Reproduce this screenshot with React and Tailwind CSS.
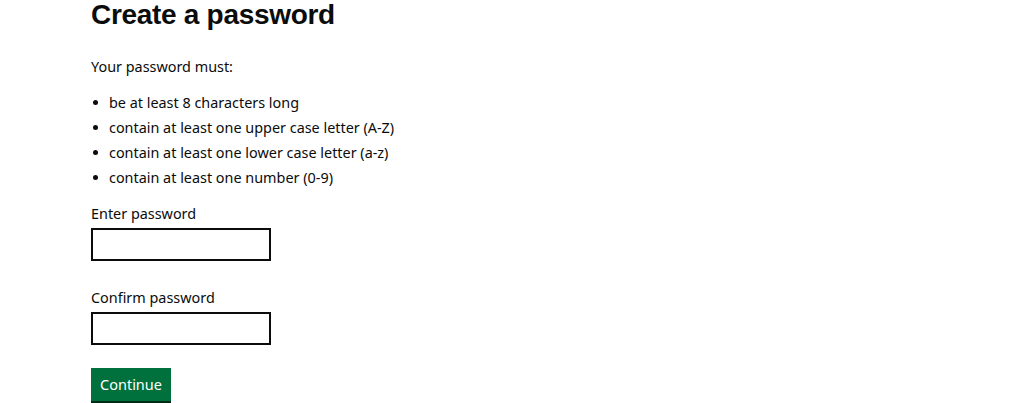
import React from 'react';

const rules = [
  'be at least 8 characters long',
  'contain at least one upper case letter (A-Z)',
  'contain at least one lower case letter (a-z)',
  'contain at least one number (0-9)',
];

const Field = ({ id, label }) => (
  <div className="flex flex-col">
    <label htmlFor={id} className="text-[14.4px] leading-[25px] text-[#0b0c0c]">
      {label}
    </label>
    <input
      id={id}
      type="password"
      className="mt-[2px] w-[180px] h-[33px] border-2 border-[#0b0c0c] bg-white px-1 outline-none"
    />
  </div>
);

const App = () => {
  return (
    <div
      className="w-[1024px] h-[403px] overflow-hidden bg-white pl-[91px] text-[#0b0c0c]"
      style={{ fontFamily: '"Noto Sans", Arial, sans-serif' }}
    >
      <h1
        className="text-[28px] leading-[30px] font-bold tracking-[-0.3px]"
        style={{ fontFamily: '"Liberation Sans", Arial, sans-serif' }}
      >
        Create a password
      </h1>
      <p className="mt-[24px] text-[14.4px] leading-[25px]">Your password must:</p>
      <ul className="mt-[11px] flex flex-col">
        {rules.map((rule) => (
          <li key={rule} className="flex items-center text-[14.4px] leading-[25px]">
            <span className="w-[5px] h-[5px] rounded-full bg-[#0b0c0c] mr-[11px] ml-[2px]" />
            {rule}
          </li>
        ))}
      </ul>
      <div className="mt-[11px] flex flex-col gap-[24px]">
        <Field id="password" label="Enter password" />
        <Field id="confirm" label="Confirm password" />
      </div>
      <button className="mt-[23px] h-[33px] px-[9px] bg-[#00703c] text-white text-[14.5px] shadow-[0_2px_0_#002d18]">
        Continue
      </button>
    </div>
  );
};

export default App;
